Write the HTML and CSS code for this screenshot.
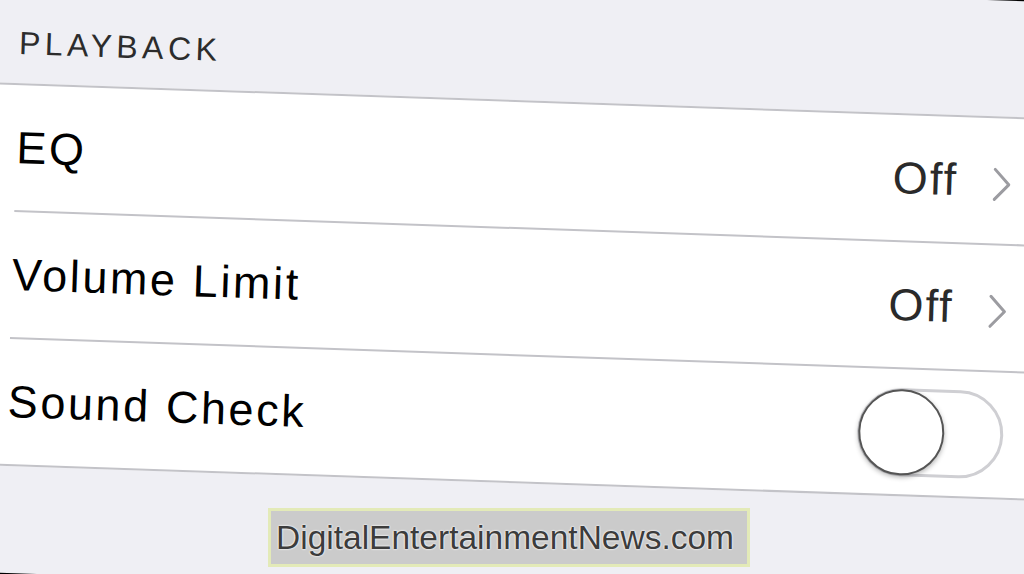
FILE: index.html
```html
<!DOCTYPE html>
<html lang="en">
<head>
    <meta charset="UTF-8">
    <title>Music Settings</title>
    <link rel="stylesheet" href="styles.css">
</head>
<body>
<div class="frame">
    <div class="screen">
        <div class="sectionHeader">PLAYBACK</div>
        <ul class="group">
            <li class="cell">
                <div class="cellBody">
                    <span class="label">EQ</span>
                    <span class="detail">
                        <span class="value">Off</span>
                        <svg class="chevron" width="20" height="34" viewBox="0 0 20 34">
                            <polyline points="3,2 17,17 3,32" fill="none" stroke="#9c9ca1" stroke-width="3" stroke-linecap="round" stroke-linejoin="round"/>
                        </svg>
                    </span>
                </div>
            </li>
            <li class="cell">
                <div class="cellBody">
                    <span class="label">Volume Limit</span>
                    <span class="detail">
                        <span class="value">Off</span>
                        <svg class="chevron" width="20" height="34" viewBox="0 0 20 34">
                            <polyline points="3,2 17,17 3,32" fill="none" stroke="#9c9ca1" stroke-width="3" stroke-linecap="round" stroke-linejoin="round"/>
                        </svg>
                    </span>
                </div>
            </li>
            <li class="cell">
                <div class="cellBody">
                    <span class="label">Sound Check</span>
                    <span class="switch">
                        <span class="knob"></span>
                    </span>
                </div>
            </li>
        </ul>
    </div>
    <div class="watermark">DigitalEntertainmentNews.com</div>
</div>
</body>
</html>
```

FILE: styles.css
```css
*{
    padding:0px;
    margin:0px;
    list-style: none;
    box-sizing: border-box;
}
html,body{
    overflow: hidden;
    background-color: #000;
}
body{
    font-family: "Liberation Sans", Arial, sans-serif;
}
.frame{
    position: relative;
    width:1024px;
    height:574px;
    overflow: hidden;
}
/* the photographed phone screen is tilted a little clockwise */
.frame .screen{
    width:1060px;
    height:606px;
    margin:-16px 0px 0px -18px;
    background-color: #efeff4;
    transform: rotate(1.95deg);
}
.screen .sectionHeader{
    padding:58px 0px 22px 29px;
    height:116px;
    font-size:32px;
    line-height:36px;
    letter-spacing:4.5px;
    color:#2c2c2c;
}
.screen .group{
    background-color: #fff;
    border-top:2px solid #c3c3c8;
    border-bottom:2px solid #c3c3c8;
}
.screen .cell{
    padding-left:30px;
}
.screen .cellBody{
    display:flex;
    align-items:center;
    justify-content:space-between;
    height:127px;
    padding-right:34px;
    border-bottom:2px solid #c3c3c8;
}
.screen .cell:last-child .cellBody{
    height:125px;
    border-bottom:none;
}
.screen .label{
    font-size:45px;
    line-height:45px;
    letter-spacing:2.6px;
    color:#000;
}
.screen .detail{
    display:flex;
    align-items:center;
    gap:34px;
}
.screen .value{
    font-size:45px;
    line-height:45px;
    letter-spacing:2px;
    color:#2a2a2a;
}
.screen .chevron{
    display:block;
    margin-top:6px;
}
.screen .switch{
    display:flex;
    align-items:center;
    width:146px;
    height:88px;
    border:3px solid #cfcfd3;
    border-radius:44px;
    background-color: #fff;
}
.screen .knob{
    width:86px;
    height:86px;
    margin-left:-2px;
    border-radius:50%;
    border:2px solid #555;
    background-color: #fff;
    box-shadow: 0px 2px 5px rgba(0,0,0,0.3);
}
.frame .watermark{
    position:absolute;
    left:268px;
    top:508px;
    width:482px;
    height:59px;
    padding-left:5px;
    display:flex;
    align-items:center;
    border:3px solid #e3eab8;
    background-color: #cbcbcb;
    font-size:33.5px;
    color:#3c3c3c;
    text-shadow: 0px 0px 2px #fff, 0px 0px 2px #fff;
}
```
